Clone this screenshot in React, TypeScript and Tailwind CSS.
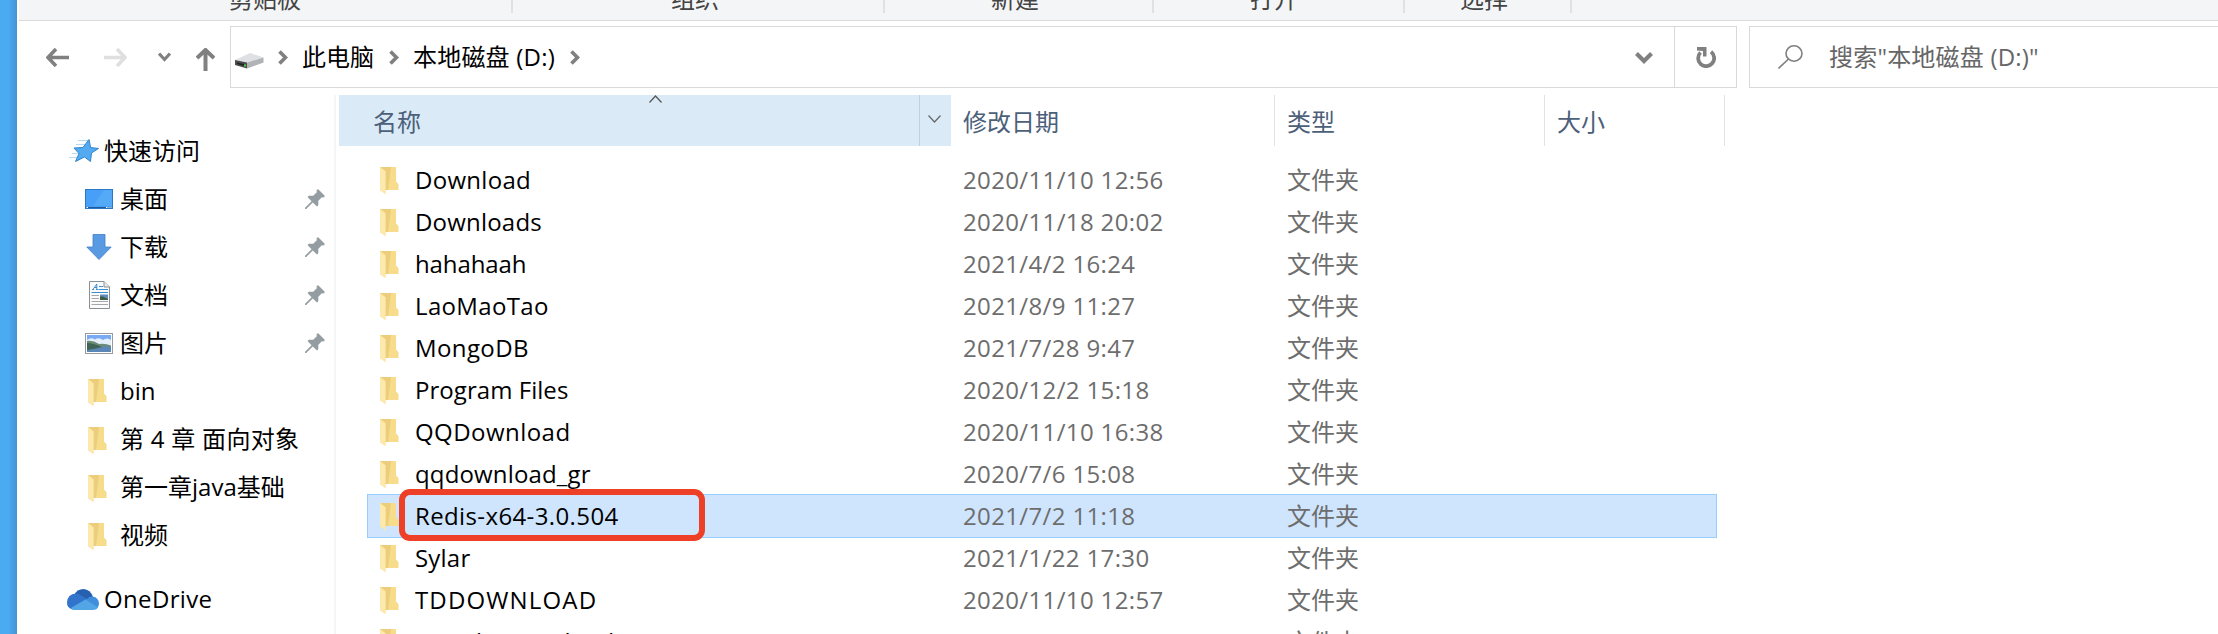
import React from "react";

const FONT = "font-['Open_Sans','Noto_Sans_CJK_SC',sans-serif] font-normal";

function Folder({ className = "" }: { className?: string }) {
  return (
    <svg width="19" height="27" viewBox="0 0 19 27" className={"shrink-0 " + className}>
      <path d="M0 0H16V14.500L18.500 17V23H5.500V27L0 23Z" fill="#f6dc8b" />
      <path d="M1 0H11L8 23H5.500V4Z" fill="#ebcd7b" />
      <path d="M0 0.500L5.500 4.500V27L0 23.500Z" fill="#fde9ad" />
    </svg>
  );
}

function Pin() {
  return (
    <svg width="20" height="20" viewBox="0 0 20 20" className="shrink-0">
      <path d="M13 0L20 7L18.5 8.5L16.8 8.2L13.3 11.8V16.2L12 17.5L7.800 13.4L1.200 20H0V18.8L6.600 12.2L2.500 8L3.800 6.700H8.200L11.8 3.200L11.5 1.500Z" fill="#949da1" />
    </svg>
  );
}

function Star() {
  return (
    <svg width="30" height="24" viewBox="0 0 30 24" className="shrink-0">
      <path d="M9 1.500H19M7 5.500H17M3 14.500H10M0 18.500H8" stroke="#b5d9f4" strokeWidth="1.200" />
      <path d="M20 .5L21.6 8.500L29.500 9.500L22.500 14L21.500 22.500L15.500 18L6.500 22.500L10 14.500L5 9L14 8.500Z" fill="#54aaf0" stroke="#3184cb" strokeWidth="1" />
    </svg>
  );
}

function Desktop() {
  return (
    <svg width="28" height="20" viewBox="0 0 28 20" className="shrink-0">
      <rect x=".5" y=".5" width="27" height="19" fill="#479ff7" stroke="#2b78c4" />
      <path d="M19 1H27V17H8Z" fill="#55aaf8" />
      <path d="M1 18.500H27" stroke="#1d5c9e" />
      <path d="M1.500 18.500H3M21 18.500H22.500M23.500 18.500H24.500M25.500 18.500H26.500" stroke="#fff" />
    </svg>
  );
}

function Down() {
  return (
    <svg width="26" height="26" viewBox="0 0 26 26" className="shrink-0">
      <path d="M7 .5H19V13H25.200L13 25.500L.8 13H7Z" fill="#5a9ae3" stroke="#3f7ec9" strokeWidth=".8" />
    </svg>
  );
}

function Doc() {
  return (
    <svg width="21" height="28" viewBox="0 0 21 28" className="shrink-0">
      <path d="M.5 .5H15L20.500 6V27.500H.5Z" fill="#fbfbfb" stroke="#8a8f93" />
      <path d="M15 .5V6H20.500" fill="#e8e8e8" stroke="#8a8f93" />
      <path d="M3 8.500H5M7 8.500H9.500M4 8.500L7.800 3V8.500M5.500 6.500H8M10 5.500H14M10 8.500H19M2.500 11.500H19" stroke="#3e8fd2" fill="none" />
      <path d="M2.500 14.500H10M2.500 17.500H10M2.500 20.500H19M2.500 23.500H19" stroke="#a7a7a7" />
      <rect x="11" y="13.500" width="8" height="5.500" fill="#5f8dc0" />
      <path d="M11 15.500L14 15.500L19 18V19H11Z" fill="#3f5d45" />
    </svg>
  );
}

function Picture() {
  return (
    <svg width="28" height="21" viewBox="0 0 28 21" className="shrink-0">
      <rect x=".5" y=".5" width="27" height="20" fill="#fff" stroke="#9a9a9a" />
      <rect x="2" y="2" width="24" height="17" fill="#79a9f2" />
      <path d="M2 7Q6 4 10 6.500Q14 4 18 7Q22 4 26 7V13H2Z" fill="#e4effa" />
      <path d="M2 8Q8 7 14 11Q20 10 26 12.500V14H2Z" fill="#6c8b76" />
      <path d="M2 13.500H26V19H2Z" fill="#5b87b6" />
      <path d="M2 10Q8 10 17 14Q10 16 2 17Z" fill="#3f6455" />
    </svg>
  );
}

function Cloud() {
  return (
    <svg width="32" height="21" viewBox="0 0 32 21" className="shrink-0">
      <path d="M7 6Q10 0 16.500 0Q23.500 0.500 26 8L20 13Z" fill="#2860b0" />
      <path d="M0 13.500Q.5 5 9 4.500Q12 4.500 15 7L22 11L4 20Q0 18 0 13.500Z" fill="#3273cb" />
      <path d="M20 10Q22 7 25.500 7.500Q32 8.500 32 15Q31.500 18 30 19.500L18 11Z" fill="#3f8edb" />
      <path d="M3 19.500L18.500 10.500L31 18.500Q29.500 21 26 21H8Q5 21 3 19.500Z" fill="#53a6e6" />
    </svg>
  );
}

function Drive() {
  return (
    <svg width="29" height="16" viewBox="0 0 29 16" className="mt-[8px] shrink-0">
      <path d="M0 7L15 0L28.500 4.500L12 9.500Z" fill="#dfe0e3" />
      <path d="M12 9.500L28.500 4.500V9.500L12 15.500Z" fill="#b1b2b5" />
      <path d="M0 7L12 9.500V15.500L0 12Z" fill="#4b4d4d" />
      <path d="M2 9.500L9 11V13L2 11Z" fill="#222" />
      <path d="M9 11.500h2v2h-2Z" fill="#45cf45" />
    </svg>
  );
}

function Crumb({ className = "" }: { className?: string }) {
  return (
    <svg width="10" height="15" viewBox="0 0 10 15" className={"shrink-0 " + className}>
      <path d="M1.500 1.500L7.500 7.500L1.500 13.500" fill="none" stroke="#808080" strokeWidth="3.700" />
    </svg>
  );
}

const groups = [
  { name: "剪贴板", w: "w-[494px]", pad: "pl-[210px]" },
  { name: "组织", w: "w-[372px]", pad: "pl-[158px]" },
  { name: "新建", w: "w-[269px]", pad: "pl-[106px]" },
  { name: "打开", w: "w-[251px]", pad: "pl-[96px]" },
  { name: "选择", w: "w-[167px]", pad: "pl-[55px]" },
];

const places = [
  { name: "桌面", icon: <Desktop />, pin: true },
  { name: "下载", icon: <Down />, pin: true },
  { name: "文档", icon: <Doc />, pin: true },
  { name: "图片", icon: <Picture />, pin: true },
  { name: "bin", icon: <Folder />, pin: false },
  { name: "第 4 章 面向对象", icon: <Folder />, pin: false, track: "tracking-[0.28px]" },
  { name: "第一章java基础", icon: <Folder />, pin: false },
  { name: "视频", icon: <Folder />, pin: false },
];

const files = [
  ["Download", "2020/11/10 12:56", "tracking-[0.3px]"],
  ["Downloads", "2020/11/18 20:02", "tracking-[0.2px]"],
  ["hahahaah", "2021/4/2 16:24", "tracking-[-0.1px]"],
  ["LaoMaoTao", "2021/8/9 11:27", "tracking-[0.35px]"],
  ["MongoDB", "2021/7/28 9:47", "tracking-[0.4px]"],
  ["Program Files", "2020/12/2 15:18", "tracking-[0.05px]"],
  ["QQDownload", "2020/11/10 16:38", "tracking-[0.45px]"],
  ["qqdownload_gr", "2020/7/6 15:08", "tracking-[0.15px]"],
  ["Redis-x64-3.0.504", "2021/7/2 11:18", "tracking-[0.38px]"],
  ["Sylar", "2021/1/22 17:30", "tracking-[0.2px]"],
  ["TDDOWNLOAD", "2020/11/10 12:57", "tracking-[1.15px]"],
  ["XingshiDownload", "2020/11/10 18:08", "tracking-[0.4px]"],
];

export default function App() {
  return (
    <div className={"flex h-[634px] w-[2218px] overflow-hidden bg-white text-[24px] leading-[42px] text-black " + FONT}>
      <div className="w-[17px] shrink-0 bg-linear-to-r from-[#4babf2] from-50% to-[#4593d2]" />
      <div className="flex min-w-0 flex-1 flex-col">
        <header className="ml-[2px] flex h-[21px] shrink-0 items-start overflow-hidden border-b border-[#d9dadc] bg-[#f4f5f7] text-[#444]">
          {groups.map((g) => (
            <div key={g.name} className={"h-[13px] shrink-0 border-r-2 border-[#e0e1e3] " + g.w + " " + g.pad}>
              <span className="-mt-[22px] block whitespace-nowrap">{g.name}</span>
            </div>
          ))}
        </header>

        <div className="flex h-[74px] shrink-0 items-start pt-[5px]">
          <nav className="flex h-[62px] w-[213px] shrink-0 items-center pl-[29px]">
            <svg className="mt-[1px]" width="23" height="19" viewBox="0 0 23 19"><path d="M10 1L2 9.500L10 18M2 9.500H23" fill="none" stroke="#808080" strokeWidth="3.600" /></svg>
            <svg className="mt-[1px] ml-[35px]" width="23" height="19" viewBox="0 0 23 19"><path d="M13 1L21 9.500L13 18M21 9.500H0" fill="none" stroke="#dfdfdf" strokeWidth="3.600" /></svg>
            <svg className="ml-[31px]" width="13" height="10" viewBox="0 0 13 10"><path d="M1 1.500L6.500 7.500L12 1.500" fill="none" stroke="#808080" strokeWidth="3.200" /></svg>
            <svg className="mt-[4px] ml-[25px]" width="19" height="23" viewBox="0 0 19 23"><path d="M1 10L9.500 2L18 10M9.500 2V23" fill="none" stroke="#808080" strokeWidth="4" /></svg>
          </nav>
          <div className="flex h-[62px] w-[1507px] shrink-0 items-center border border-[#d9d9d9] pl-[4px]">
            <Drive />
            <Crumb className="ml-[14px]" />
            <span className="ml-[14px] whitespace-nowrap">此电脑</span>
            <Crumb className="ml-[15px]" />
            <span className="ml-[14px] w-[142px] whitespace-nowrap tracking-[0.2px]">本地磁盘 (D:)</span>
            <Crumb className="ml-[15px]" />
            <svg className="mt-[1px] ml-auto" width="18" height="12" viewBox="0 0 18 12"><path d="M1.500 1.500L9 9L16.500 1.500" fill="none" stroke="#808080" strokeWidth="4.200" /></svg>
            <div className="ml-[21px] flex h-full w-[62px] items-center justify-center border-l border-[#d9d9d9]">
              <svg width="20" height="21" viewBox="0 0 20 21">
                <path d="M15 4.800A8 8 0 1 1 4.500 5.500" fill="none" stroke="#808080" strokeWidth="3.800" />
                <path d="M1 0H10.500V9.500H7V4L1 3.500Z" fill="#808080" />
              </svg>
            </div>
          </div>
          <div className="ml-[12px] flex h-[62px] flex-1 items-center border border-r-0 border-[#d9d9d9] pl-[28px] text-[#666]">
            <svg width="25" height="24" viewBox="0 0 25 24" fill="none" stroke="#808080" strokeWidth="1.600"><ellipse cx="16" cy="8.500" rx="8" ry="7.700" /><path d="M10.500 14L.5 23.500" /></svg>
            <span className="ml-[26px] whitespace-nowrap tracking-[0.2px]">搜索"本地磁盘 (D:)"</span>
          </div>
        </div>

        <div className="flex min-h-0 flex-1 pl-[2px]">
          <aside className="flex w-[317px] shrink-0 flex-col border-r-2 border-[#f5f5f5] pt-[32px]">
            <div className="flex h-[48px] items-center pl-[50px]">
              <Star />
              <span className="ml-[5px]">快速访问</span>
            </div>
            {places.map((p) => (
              <div key={p.name} className="flex h-[48px] shrink-0 items-center pr-[9px] pl-[66px]">
                <span className={"flex w-[28px] " + (p.pin ? "justify-center" : "pt-[2px] pl-[3px]")}>{p.icon}</span>
                <span className={"ml-[7px] flex-1 whitespace-nowrap " + (p.track ?? "")}>{p.name}</span>
                {p.pin && <Pin />}
              </div>
            ))}
            <div className="mt-[16px] flex h-[48px] shrink-0 items-center pl-[48px]">
              <Cloud />
              <span className="ml-[5px] tracking-[0.35px]">OneDrive</span>
            </div>
          </aside>

          <main className="min-w-0 flex-1 overflow-hidden pl-[3px]">
            <div className="flex h-[51px] leading-[53px] text-[#4c607a]">
              <div className="relative flex w-[612px] bg-[#daeaf7]">
                <span className="w-[580px] pl-[34px]">名称</span>
                <svg className="absolute top-0 left-[310px]" width="13" height="8" viewBox="0 0 13 8"><path d="M.5 7.500L6.500 1L12.500 7.500" fill="none" stroke="#555" strokeWidth="1.200" /></svg>
                <span className="flex flex-1 items-center justify-center border-l border-[#bfd0e2]">
                  <svg className="-mt-[3px] mr-[3px]" width="13" height="8" viewBox="0 0 13 8"><path d="M.5 .5L6.500 7L12.500 .5" fill="none" stroke="#666" strokeWidth="1.200" /></svg>
                </span>
              </div>
              <span className="w-[324px] border-r border-[#e3e3e3] pl-[12px]">修改日期</span>
              <span className="w-[270px] border-r border-[#e3e3e3] pl-[12px]">类型</span>
              <span className="w-[180px] border-r border-[#e3e3e3] pl-[12px]">大小</span>
            </div>
            <ul className="pt-[13px] pl-[28px]">
              {files.map(([name, date, track]) => {
                const selected = name.startsWith("Redis");
                return (
                  <li key={name} className="relative flex h-[42px] w-[1350px] items-center whitespace-nowrap">
                    {selected && <span className="absolute -top-[1px] left-0 h-[44px] w-[1350px] border border-[#99cdfc] bg-[#cfe5fd]" />}
                    <Folder className="relative ml-[13px]" />
                    <span className={"relative ml-[16px] w-[548px] " + track}>{name}</span>
                    <span className="relative w-[324px] tracking-[0.36px] text-[#6d6d6d]">{date}</span>
                    <span className="relative text-[#6d6d6d]">文件夹</span>
                    {selected && <span className="absolute -top-[6px] left-[32px] h-[52px] w-[306px] rounded-[11px] border-[6px] border-[#ee4026]" />}
                  </li>
                );
              })}
            </ul>
          </main>
        </div>
      </div>
    </div>
  );
}
